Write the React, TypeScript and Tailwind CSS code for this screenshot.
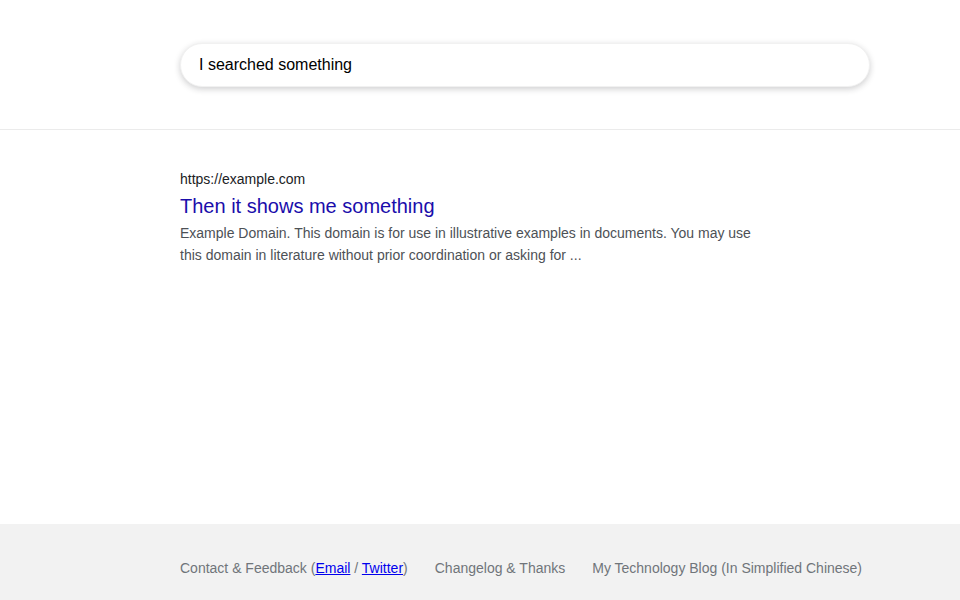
export default function App() {
  return (
    <div className="flex min-h-screen flex-col bg-white font-['Liberation_Sans',Arial,sans-serif]">
      <header className="border-b border-[#ebebeb] pt-[43px] pb-[42px] pl-[180px]">
        <div className="flex h-[44px] w-[690px] items-center rounded-full border border-[#f1f1f1] bg-white px-[18px] shadow-[0_2px_6px_rgba(32,33,36,0.22)]">
          <input
            className="w-full bg-transparent text-base text-black outline-none"
            defaultValue="I searched something"
          />
        </div>
      </header>

      <main className="flex-1 pt-[39px] pl-[180px]">
        <div className="max-w-[578px]">
          <div className="text-sm leading-5 text-[#202124]">https://example.com</div>
          <a href="#" className="mt-1 block text-xl leading-[26px] text-[#1a0dab]">
            Then it shows me something
          </a>
          <p className="mt-[3px] text-sm leading-[22px] text-[#4d5156]">
            Example Domain. This domain is for use in illustrative examples in documents. You may use
            this domain in literature without prior coordination or asking for ...
          </p>
        </div>
      </main>

      <footer className="flex h-[76px] items-start gap-[27px] bg-[#f2f2f2] pt-[34px] pl-[180px] text-sm leading-5 text-[#70757a]">
        <span>
          Contact &amp; Feedback (
          <a href="#" className="text-[#0000ee] underline">
            Email
          </a>{" "}
          /{" "}
          <a href="#" className="text-[#0000ee] underline">
            Twitter
          </a>
          )
        </span>
        <a href="#">Changelog &amp; Thanks</a>
        <a href="#">My Technology Blog (In Simplified Chinese)</a>
      </footer>
    </div>
  );
}
